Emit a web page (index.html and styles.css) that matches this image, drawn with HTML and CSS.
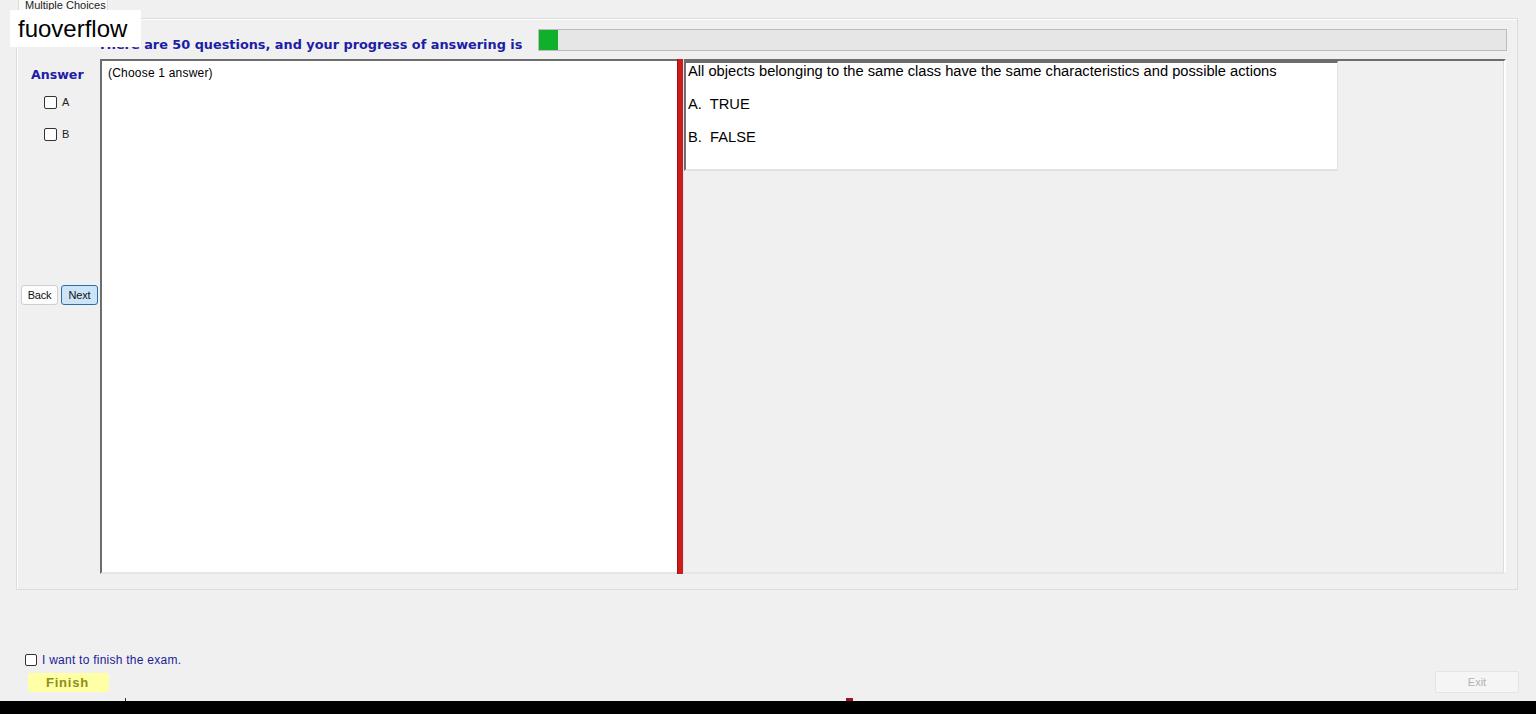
FILE: index.html
```html
<!DOCTYPE html>
<html lang="en">
<head>
    <meta charset="UTF-8">
    <title>Multiple Choices</title>
    <link rel="stylesheet" href="styles.css">
</head>
<body>
    <div class="watermark">fuoverflow</div>

    <div class="tab">Multiple Choices</div>

    <div class="group">
        <div class="group-head">
            <div class="title">There are 50 questions, and your progress of answering is</div>
            <div class="progress"><div class="progress-fill" style="width: 19px"></div></div>
        </div>

        <div class="group-body">
            <div class="answer-col">
                <div class="answer-label">Answer</div>
                <div class="opt"><span class="box"></span>A</div>
                <div class="opt"><span class="box"></span>B</div>
                <div class="nav-btns">
                    <button class="btn">Back</button>
                    <button class="btn btn-next">Next</button>
                </div>
            </div>

            <div class="panes">
                <div class="pane-left">(Choose 1 answer)</div>
                <div class="splitter"></div>
                <div class="pane-right">
                    <div class="question">
                        <p>All objects belonging to the same class have the same characteristics and possible actions</p>
                        <p>A.&nbsp; TRUE</p>
                        <p>B.&nbsp; FALSE</p>
                    </div>
                </div>
            </div>
        </div>
    </div>

    <div class="foot">
        <div class="foot-left">
            <div class="finish-check"><span class="box"></span>I want to finish the exam.</div>
            <button class="finish-btn">Finish</button>
        </div>
        <button class="exit-btn" disabled>Exit</button>
    </div>

    <div class="taskbar">
        <span class="tick"></span>
        <span class="tick tick-red"></span>
    </div>
</body>
</html>
```

FILE: styles.css
```css
* {
    margin: 0;
    padding: 0;
    box-sizing: border-box;
}

body {
    background: #f0f0f0;
    font-family: 'Liberation Sans', Arial, sans-serif;
    font-size: 12px;
    color: #000;
    height: 714px;
    display: flex;
    flex-direction: column;
    overflow: hidden;
    position: relative;
}

/* overlay label */
.watermark {
    position: absolute;
    left: 10px;
    top: 10px;
    width: 131px;
    height: 37px;
    background: #fff;
    font-size: 24px;
    line-height: 37px;
    padding-left: 8px;
    color: #000;
    z-index: 5;
}

.tab {
    margin-left: 18px;
    margin-top: -2px;
    width: 90px;
    height: 20px;
    background: #fafafa;
    border: 1px solid #dadada;
    border-bottom: none;
    font-size: 11px;
    line-height: 12px;
    padding-left: 6px;
    color: #222;
}

.group {
    margin-left: 16px;
    width: 1502px;
    height: 572px;
    border: 1px solid #dcdcdc;
    box-shadow: inset 1px 1px 0 #fff;
    padding-top: 10px;
}

.group-head {
    display: flex;
    height: 22px;
    padding-left: 81px;
    padding-right: 10px;
}

.title {
    width: 440px;
    font-family: 'DejaVu Sans', Verdana, sans-serif;
    font-size: 12.85px;
    font-weight: bold;
    color: #1c1ca6;
    padding-top: 8px;
    line-height: 16px;
    white-space: nowrap;
}

.progress {
    flex: 1;
    height: 22px;
    background: #e6e6e6;
    border: 1px solid #bcbcbc;
}

.progress-fill {
    height: 20px;
    background: #0fb02a;
}

.group-body {
    display: flex;
    margin-top: 8px;
    height: 515px;
}

.answer-col {
    width: 83px;
    display: flex;
    flex-direction: column;
    align-items: flex-start;
}

.answer-label {
    margin-left: 14px;
    margin-top: 9px;
    font-family: 'DejaVu Sans', Verdana, sans-serif;
    font-size: 12.6px;
    font-weight: bold;
    color: #1c1ca6;
    line-height: 14px;
}

.opt {
    display: flex;
    align-items: center;
    margin-left: 27px;
    margin-top: 11px;
    height: 18px;
    font-size: 11px;
    color: #222;
}

.opt + .opt {
    margin-top: 14px;
}

.box {
    display: inline-block;
    width: 13px;
    height: 13px;
    border: 1px solid #333;
    border-radius: 2px;
    background: #fff;
    margin-right: 5px;
}

.nav-btns {
    display: flex;
    gap: 3px;
    margin-top: 142px;
    margin-left: 4px;
}

.btn {
    width: 37px;
    height: 20px;
    font-family: 'Liberation Sans', Arial, sans-serif;
    font-size: 11px;
    letter-spacing: -0.2px;
    color: #111;
    background: #fdfdfd;
    border: 1px solid #cfcfcf;
    border-radius: 3px;
}

.btn-next {
    background: #cce4f7;
    border-color: #2f6ea5;
}

.panes {
    display: flex;
    width: 1406px;
    height: 515px;
}

.pane-left {
    width: 577px;
    background: #fff;
    border-left: 2px solid #6d6d6d;
    border-top: 2px solid #6d6d6d;
    border-bottom: 2px solid #e6e6e6;
    padding: 5px 0 0 6px;
    line-height: 14px;
    letter-spacing: 0.2px;
}

.splitter {
    width: 7px;
    background: #cc1c1c;
    border-left: 1px solid #9a1414;
    border-right: 1px solid #d8e8ee;
}

.pane-right {
    flex: 1;
    border-top: 2px solid #6d6d6d;
    border-right: 2px solid #fff;
    border-bottom: 2px solid #e6e6e6;
    box-shadow: inset -1px 0 0 #dcdcdc;
}

.question {
    width: 654px;
    height: 110px;
    background: #fff;
    border-left: 2px solid #6d6d6d;
    border-top: 2px solid #6d6d6d;
    border-bottom: 2px solid #e2e2e2;
    border-right: 1px solid #e2e2e2;
    padding-left: 2px;
    font-size: 14.7px;
    color: #000;
}

.question p {
    line-height: 16px;
    margin-bottom: 17px;
}

.foot {
    height: 111px;
    display: flex;
    justify-content: space-between;
    align-items: flex-end;
    padding: 0 17px 8px 25px;
}

.foot-left {
    display: flex;
    flex-direction: column;
    padding-bottom: 1px;
}

.finish-check {
    display: flex;
    align-items: center;
    font-size: 12px;
    letter-spacing: 0.25px;
    color: #1c1c96;
    height: 16px;
}

.finish-check .box {
    width: 12px;
    height: 12px;
}

.finish-btn {
    margin-top: 5px;
    margin-left: 3px;
    width: 81px;
    height: 19px;
    background: #ffffa6;
    border: none;
    border-radius: 3px;
    font-family: 'Liberation Sans', Arial, sans-serif;
    font-size: 13px;
    font-weight: bold;
    letter-spacing: 0.8px;
    color: #8e8e18;
    padding-right: 2px;
}

.exit-btn {
    width: 84px;
    height: 22px;
    background: #f5f5f5;
    border: 1px solid #e4e4e4;
    border-radius: 2px;
    font-family: 'Liberation Sans', Arial, sans-serif;
    font-size: 11px;
    color: #b2b2b2;
}

.taskbar {
    height: 13px;
    background: #000;
    position: relative;
}

.tick {
    position: absolute;
    left: 125px;
    top: -3px;
    width: 1px;
    height: 3px;
    background: #333;
}

.tick-red {
    left: 846px;
    width: 7px;
    height: 3px;
    background: #a0102a;
}
```
